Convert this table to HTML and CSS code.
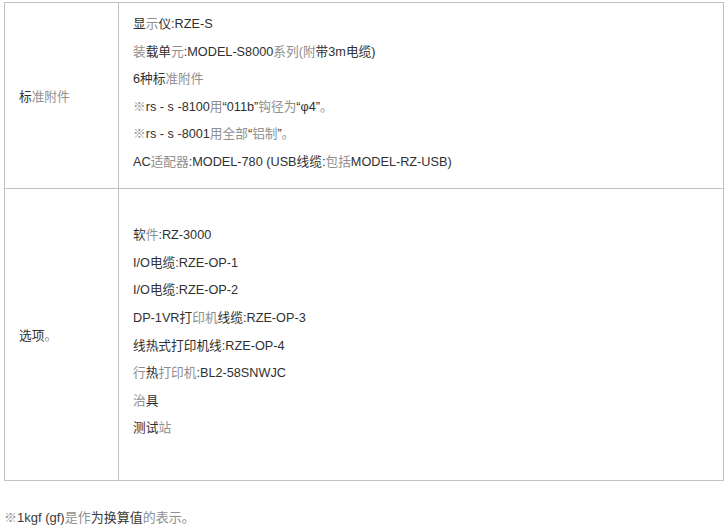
FILE: index.html
```html
<!DOCTYPE html>
<html lang="zh">
<head>
<meta charset="utf-8">
<link rel="stylesheet" href="styles.css">
</head>
<body>
<div class="page">
  <table class="spec">
    <tr class="row-a">
      <td class="label">标<span class="l">准附件</span></td>
      <td class="items">
        <p>显<span class="l">示</span>仪:RZE-S</p>
        <p><span class="l">装</span>载单<span class="l">元</span>:MODEL-S8000<span class="l">系列(附</span>带3m电缆)</p>
        <p>6种标<span class="l">准附件</span></p>
        <p><span class="l">※</span>rs - s -8100<span class="l">用</span>“011b”<span class="l">钩径为</span>“φ4”<span class="l">。</span></p>
        <p><span class="l">※</span>rs - s -8001<span class="l">用全部</span>“<span class="l">铝制</span>”<span class="l">。</span></p>
        <p>AC<span class="l">适配器</span>:MODEL-780 (USB线缆:<span class="l">包括</span>MODEL-RZ-USB)</p>
      </td>
    </tr>
    <tr class="row-b">
      <td class="label">选项<span class="l">。</span></td>
      <td class="items">
        <p>&nbsp;</p>
        <p>软<span class="l">件</span>:RZ-3000</p>
        <p>I/O电缆:RZE-OP-1</p>
        <p>I/O电缆:RZE-OP-2</p>
        <p>DP-1VR打<span class="l">印机</span>线缆:RZE-OP-3</p>
        <p>线热式打印机线:RZE-OP-4</p>
        <p><span class="l">行</span>热<span class="l">打印机</span>:BL2-58SNWJC</p>
        <p><span class="l">治</span>具</p>
        <p>测试<span class="l">站</span></p>
        <p>&nbsp;</p>
      </td>
    </tr>
  </table>
  <p class="note"><span class="l">※</span>1kgf (gf)<span class="l">是作</span>为换算值<span class="l">的表示。</span></p>
</div>
</body>
</html>
```
FILE: styles.css
```css
html, body {
  margin: 0;
  padding: 0;
  background: #ffffff;
}
body {
  font-family: "Liberation Sans", Arial, "Noto Sans CJK SC", sans-serif;
  font-size: 12.7px;
  color: #303030;
}
.page {
  padding: 2px 0 0 4px;
}
.spec {
  border-collapse: collapse;
  width: 720px;
}
.spec td {
  border: 1px solid #c2c2c2;
  vertical-align: middle;
  padding: 0 14px;
}
.label {
  width: 85px;
}
.items p {
  margin: 0;
  line-height: 27.6px;
  white-space: nowrap;
}
.row-a .items {
  padding-top: 8px;
  padding-bottom: 11px;
}
.row-b .items {
  padding-top: 6px;
  padding-bottom: 9px;
}
.l {
  color: #8f8f8f;
}
.note {
  margin: 28px 0 0 0;
  font-size: 13px;
  line-height: 18px;
  color: #3a3a3a;
}
```
